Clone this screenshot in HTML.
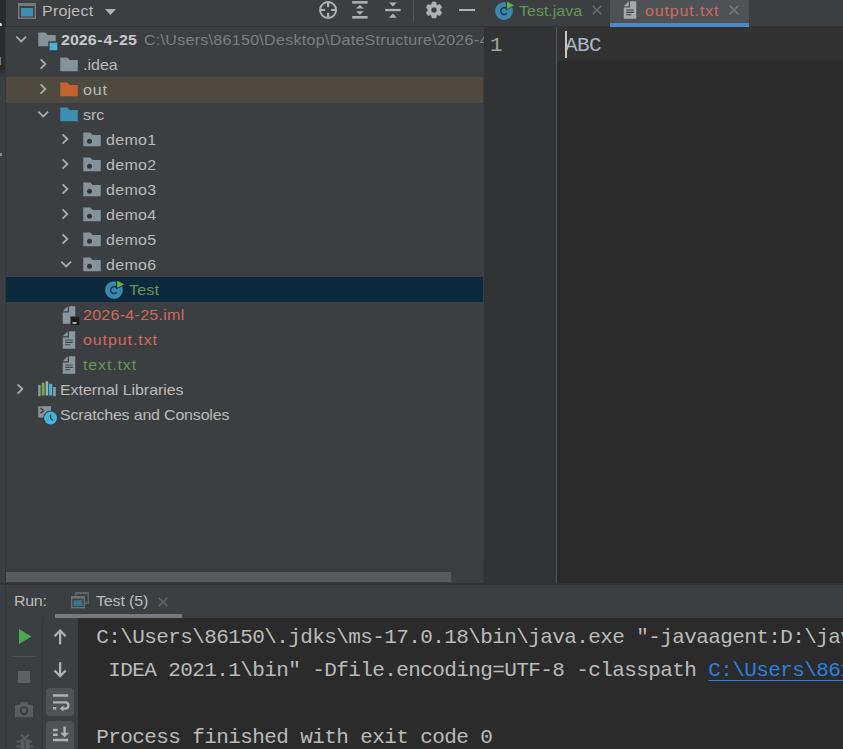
<!DOCTYPE html>
<html>
<head>
<meta charset="utf-8">
<style>
html,body{margin:0;padding:0;}
body{width:843px;height:749px;overflow:hidden;background:#3c3f41;position:relative;font-family:"Liberation Sans",sans-serif;color:#bbbbbb;}
.abs{position:absolute;}
.t{position:absolute;white-space:nowrap;font-size:15px;line-height:25px;height:25px;color:#bbbbbb;transform:scaleX(1.0667);transform-origin:0 0;}
.t.mono{transform:none;letter-spacing:-0.6px;}
.mono{font-family:"Liberation Mono",monospace;}
svg{position:absolute;overflow:visible;}
.tree{position:absolute;left:0;top:27px;width:484px;height:545px;overflow:hidden;}
.tree .t{margin-top:-27px;}
.tree svg{margin-top:-27px;}
</style>
</head>
<body>

<div class="abs" style="left:0;top:0;width:5.5px;height:69px;background:#2b2b2b;"></div>
<div class="abs" style="left:0;top:69px;width:5.5px;height:9px;background:linear-gradient(#2b2b2b,#3c3f41);"></div>
<div class="abs" style="left:5px;top:27px;width:1px;height:722px;background:#35383a;"></div>
<div class="abs" style="left:-1.5px;top:22.8px;width:3.6px;height:3.6px;border-radius:2px;background:#dddddd;"></div>
<div class="abs" style="left:0;top:56.5px;width:1.2px;height:8.5px;background:#777777;"></div>
<div class="abs" style="left:0;top:153px;width:2px;height:2.5px;background:#8a8c8e;"></div>
<div class="abs" style="left:6px;top:26px;width:837px;height:1px;background:#323232;"></div>
<div class="abs" style="left:6px;top:76.5px;width:477px;height:26px;background:#4e4a3f;"></div>
<div class="abs" style="left:6px;top:277px;width:477px;height:25px;background:#0d293e;"></div>
<div class="abs" style="left:484px;top:27px;width:359px;height:556px;background:#2b2b2b;"></div>
<div class="abs" style="left:484px;top:27px;width:72px;height:556px;background:#313335;"></div>
<div class="abs" style="left:557px;top:27px;width:286px;height:34px;background:#323232;"></div>
<div class="abs" style="left:556px;top:27px;width:1px;height:556px;background:#555555;"></div>
<div class="abs" style="left:610px;top:0;width:139px;height:26px;background:#4e5254;"></div>
<div class="abs" style="left:610px;top:23px;width:139px;height:4px;background:#4a88c7;"></div>
<div class="abs" style="left:6px;top:572px;width:445px;height:10px;background:#595b5d;"></div>
<div class="abs" style="left:0;top:583px;width:843px;height:1.6px;background:#313335;"></div>
<div class="abs" style="left:78px;top:618px;width:765px;height:131px;background:#2b2b2b;"></div>
<div class="abs" style="left:481.5px;top:560px;width:2.5px;height:23px;background:#383b3d;"></div>
<div class="abs" style="left:55px;top:614px;width:127px;height:4px;background:#767a7e;"></div>
<div class="abs" style="left:41.5px;top:618px;width:1px;height:131px;background:#35383a;"></div>

<div class="t" style="left:42px;top:-2px;letter-spacing:0.2px;">Project</div>
<div class="tree">
<div class="t" style="left:60.5px;top:27px;font-weight:bold;color:#c8c8c8;">2026<span style="padding:0 0.7px">-</span>4<span style="padding:0 0.7px">-</span>25</div>
<div class="t" style="left:144px;top:27px;color:#7d7d7d;letter-spacing:0.28px;">C:\Users\86150\Desktop\DateStructure\2026-4-25</div>
<div class="t" style="left:83px;top:52px;">.idea</div>
<div class="t" style="left:83px;top:77px;letter-spacing:0.8px;">out</div>
<div class="t" style="left:83px;top:102px;">src</div>
<div class="t" style="left:105.8px;top:127px;letter-spacing:0.3px;">demo1</div>
<div class="t" style="left:105.8px;top:152px;letter-spacing:0.3px;">demo2</div>
<div class="t" style="left:105.8px;top:177px;letter-spacing:0.3px;">demo3</div>
<div class="t" style="left:105.8px;top:202px;letter-spacing:0.3px;">demo4</div>
<div class="t" style="left:105.8px;top:227px;letter-spacing:0.3px;">demo5</div>
<div class="t" style="left:105.8px;top:252px;letter-spacing:0.3px;">demo6</div>
<div class="t" style="left:129px;top:277px;color:#629755;letter-spacing:0.15px;">Test</div>
<div class="t" style="left:83px;top:302px;color:#cf695c;letter-spacing:0.27px;">2026-4-25.iml</div>
<div class="t" style="left:83px;top:327px;color:#cf695c;letter-spacing:0.85px;">output.txt</div>
<div class="t" style="left:83px;top:352px;color:#629755;letter-spacing:0.8px;">text.txt</div>
<div class="t" style="left:60px;top:377px;letter-spacing:-0.05px;">External Libraries</div>
<div class="t" style="left:60px;top:402px;letter-spacing:-0.18px;">Scratches and Consoles</div>
</div>
<div class="t" style="left:519px;top:-2px;color:#629755;">Test.java</div>
<div class="t" style="left:645px;top:-2px;color:#cf695c;letter-spacing:0.8px;">output.txt</div>
<div class="t mono" style="left:490px;top:33.2px;font-size:21px;color:#a4a3a3;">1</div>
<div class="t mono" style="left:565px;top:33.2px;font-size:21px;color:#a9b7c6;">ABC</div>
<div class="abs" style="left:565px;top:31px;width:2.2px;height:27px;background:#c8c8c8;"></div>
<div class="t" style="left:14px;top:588px;letter-spacing:-0.3px;">Run:</div>
<div class="t" style="left:95.7px;top:588px;letter-spacing:-0.15px;">Test (5)</div>
<div class="t mono" style="left:96.2px;top:625px;font-size:21px;">C:\Users\86150\.jdks\ms-17.0.18\bin\java.exe "-javaagent:D:\java\IntelliJ</div>
<div class="t mono" style="left:96.2px;top:658.3px;font-size:21px;">&nbsp;IDEA 2021.1\bin" -Dfile.encoding=UTF-8 -classpath <span style="color:#2f7fdc;text-decoration:underline;text-decoration-thickness:1.3px;text-underline-offset:3.5px;">C:\Users\86150\Desktop</span></div>
<div class="t mono" style="left:96.2px;top:725.1px;font-size:21px;">Process finished with exit code 0</div>
<svg style="left:18px;top:3px;" width="18" height="16" viewBox="0 0 18 16"><rect x="0.75" y="0.75" width="16.5" height="14.5" fill="none" stroke="#737a7f" stroke-width="1.5"/><rect x="0" y="0" width="18" height="3" fill="#737a7f"/><rect x="3" y="5" width="12" height="8.5" fill="#3d8fb4"/></svg>
<svg style="left:104.5px;top:8.7px;" width="11" height="6" viewBox="0 0 11 6"><path d="M0 0 H11 L5.5 6 Z" fill="#afb1b3"/></svg>
<svg style="left:319px;top:1px;" width="19" height="19" viewBox="0 0 19 19"><circle cx="9.1" cy="9" r="8" fill="none" stroke="#afb1b3" stroke-width="2"/><path d="M9.1 1 V6 M9.1 12 V17 M1.1 9 H6.1 M12.1 9 H17.1" stroke="#afb1b3" stroke-width="2.2"/></svg>
<svg style="left:352px;top:1px;" width="16" height="18" viewBox="0 0 16 18"><rect x="0.2" y="0.1" width="15.4" height="2.5" fill="#afb1b3"/><rect x="0.2" y="15" width="15.4" height="2.6" fill="#afb1b3"/><path d="M7.9 4 L11.9 7.6 H3.9 Z M7.9 13.7 L11.9 10.3 H3.9 Z" fill="#afb1b3"/></svg>
<svg style="left:385px;top:2px;" width="16" height="16" viewBox="0 0 16 16"><rect x="0.2" y="6.9" width="15.4" height="2.3" fill="#afb1b3"/><path d="M7.9 4.4 L11.8 0.5 H4 Z M7.9 11.6 L11.8 15.7 H4 Z" fill="#afb1b3"/></svg>
<div class="abs" style="left:413px;top:0;width:1px;height:21px;background:#555555;"></div>
<svg style="left:425.8px;top:2px;" width="16" height="16" viewBox="0 0 16 16"><path d="M9.79 16.00 L6.21 16.00 L5.55 13.48 L4.48 12.86 L1.96 13.55 L0.18 10.45 L2.03 8.62 L2.03 7.38 L0.18 5.55 L1.96 2.45 L4.48 3.14 L5.55 2.52 L6.21 -0.00 L9.79 -0.00 L10.45 2.52 L11.52 3.14 L14.04 2.45 L15.82 5.55 L13.97 7.38 L13.97 8.62 L15.82 10.45 L14.04 13.55 L11.52 12.86 L10.45 13.48 Z M8 5 A3 3 0 1 0 8 11 A3 3 0 1 0 8 5 Z" fill="#afb1b3" fill-rule="evenodd" stroke="#afb1b3" stroke-width="0.6" stroke-linejoin="round"/></svg>
<div class="abs" style="left:459px;top:8.8px;width:16px;height:2.5px;background:#afb1b3;"></div>
<div class="tree" style="pointer-events:none;">
<svg style="left:15.600000000000001px;top:36.4px;" width="10.4" height="6" viewBox="0 0 10.4 6"><path d="M0.3 0.6 L5.2 5.4 L10.1 0.6" fill="none" stroke="#a9acae" stroke-width="1.8"/></svg>
<svg style="left:40.2px;top:58.8px;" width="6" height="10" viewBox="0 0 6 10"><path d="M0.6 0.3 L5.4 5 L0.6 9.7" fill="none" stroke="#a9acae" stroke-width="1.8"/></svg>
<svg style="left:40.2px;top:83.8px;" width="6" height="10" viewBox="0 0 6 10"><path d="M0.6 0.3 L5.4 5 L0.6 9.7" fill="none" stroke="#a9acae" stroke-width="1.8"/></svg>
<svg style="left:37.8px;top:111.3px;" width="10.4" height="6" viewBox="0 0 10.4 6"><path d="M0.3 0.6 L5.2 5.4 L10.1 0.6" fill="none" stroke="#a9acae" stroke-width="1.8"/></svg>
<svg style="left:62.400000000000006px;top:134.3px;" width="6" height="10" viewBox="0 0 6 10"><path d="M0.6 0.3 L5.4 5 L0.6 9.7" fill="none" stroke="#a9acae" stroke-width="1.8"/></svg>
<svg style="left:62.400000000000006px;top:159.3px;" width="6" height="10" viewBox="0 0 6 10"><path d="M0.6 0.3 L5.4 5 L0.6 9.7" fill="none" stroke="#a9acae" stroke-width="1.8"/></svg>
<svg style="left:62.400000000000006px;top:184.3px;" width="6" height="10" viewBox="0 0 6 10"><path d="M0.6 0.3 L5.4 5 L0.6 9.7" fill="none" stroke="#a9acae" stroke-width="1.8"/></svg>
<svg style="left:62.400000000000006px;top:209.3px;" width="6" height="10" viewBox="0 0 6 10"><path d="M0.6 0.3 L5.4 5 L0.6 9.7" fill="none" stroke="#a9acae" stroke-width="1.8"/></svg>
<svg style="left:62.400000000000006px;top:234.3px;" width="6" height="10" viewBox="0 0 6 10"><path d="M0.6 0.3 L5.4 5 L0.6 9.7" fill="none" stroke="#a9acae" stroke-width="1.8"/></svg>
<svg style="left:60.8px;top:261.3px;" width="10.4" height="6" viewBox="0 0 10.4 6"><path d="M0.3 0.6 L5.2 5.4 L10.1 0.6" fill="none" stroke="#a9acae" stroke-width="1.8"/></svg>
<svg style="left:17.4px;top:384.4px;" width="6" height="10" viewBox="0 0 6 10"><path d="M0.6 0.3 L5.4 5 L0.6 9.7" fill="none" stroke="#a9acae" stroke-width="1.8"/></svg>
<svg style="left:36.7px;top:29.5px;" width="20" height="20" viewBox="0 0 16 16"><path d="M1 2 H6.6 L8.6 4 H15 V13 H1 Z" fill="#87939a"/><rect x="9" y="9" width="8" height="8" fill="#3c3f41"/><rect x="10.1" y="10.2" width="6.1" height="6" fill="#40b6e0"/></svg>
<svg style="left:58.9px;top:54.7px;" width="20" height="20" viewBox="0 0 16 16"><path d="M1 2 H6.6 L8.6 4 H15 V13 H1 Z" fill="#87939a"/></svg>
<svg style="left:58.9px;top:79.7px;" width="20" height="20" viewBox="0 0 16 16"><path d="M1 2 H6.6 L8.6 4 H15 V13 H1 Z" fill="#c4632f"/></svg>
<svg style="left:58.9px;top:104.7px;" width="20" height="20" viewBox="0 0 16 16"><path d="M1 2 H6.6 L8.6 4 H15 V13 H1 Z" fill="#3a8fb5"/></svg>
<svg style="left:81.8px;top:129.6px;" width="20" height="20" viewBox="0 0 16 16"><path d="M1 2 H6.6 L8.6 4 H15 V13 H1 Z" fill="#87939a"/><circle cx="6" cy="9" r="2" fill="#30363a"/></svg>
<svg style="left:81.8px;top:154.6px;" width="20" height="20" viewBox="0 0 16 16"><path d="M1 2 H6.6 L8.6 4 H15 V13 H1 Z" fill="#87939a"/><circle cx="6" cy="9" r="2" fill="#30363a"/></svg>
<svg style="left:81.8px;top:179.6px;" width="20" height="20" viewBox="0 0 16 16"><path d="M1 2 H6.6 L8.6 4 H15 V13 H1 Z" fill="#87939a"/><circle cx="6" cy="9" r="2" fill="#30363a"/></svg>
<svg style="left:81.8px;top:204.6px;" width="20" height="20" viewBox="0 0 16 16"><path d="M1 2 H6.6 L8.6 4 H15 V13 H1 Z" fill="#87939a"/><circle cx="6" cy="9" r="2" fill="#30363a"/></svg>
<svg style="left:81.8px;top:229.6px;" width="20" height="20" viewBox="0 0 16 16"><path d="M1 2 H6.6 L8.6 4 H15 V13 H1 Z" fill="#87939a"/><circle cx="6" cy="9" r="2" fill="#30363a"/></svg>
<svg style="left:81.8px;top:254.6px;" width="20" height="20" viewBox="0 0 16 16"><path d="M1 2 H6.6 L8.6 4 H15 V13 H1 Z" fill="#87939a"/><circle cx="6" cy="9" r="2" fill="#30363a"/></svg>
<svg style="left:104.1px;top:279.6px;" width="20" height="20" viewBox="0 0 16 16"><circle cx="8" cy="8" r="7.1" fill="#3889b0"/><path d="M10.2 10 A2.8 2.8 0 1 1 10.2 6.1" fill="none" stroke="#1f3a4b" stroke-width="1.3"/><path d="M9.6 -1 L17.2 3.4 L9.6 7.6 Z" fill="#0d293e"/><path d="M10.5 0.6 L16 3.45 L10.5 6.3 Z" fill="#5fb843"/></svg>
<svg style="left:59px;top:304.6px;" width="20" height="20" viewBox="0 0 16 16"><path d="M7 1 L3 5 H7 Z" fill="#8b979e"/><path d="M8 1 V6 H3 V15 H9 V9 H13 V1 Z" fill="#8b979e"/><rect x="9.7" y="9.8" width="6.5" height="6.2" fill="#1b1b1b"/><rect x="10.8" y="13.8" width="3.2" height="1.2" fill="#e0e0e0"/></svg>
<svg style="left:59px;top:329.6px;" width="20" height="20" viewBox="0 0 16 16"><path d="M7 1 L3 5 H7 Z" fill="#8b979e"/><path d="M8 1 V6 H3 V15 H13 V1 Z" fill="#8b979e"/><path d="M5 7.5 h6 v0.95 h-6 Z M5 9.4 h6 v0.95 h-6 Z M5 11.3 h4 v0.95 h-4 Z" fill="#3d4448"/></svg>
<svg style="left:59px;top:354.6px;" width="20" height="20" viewBox="0 0 16 16"><path d="M7 1 L3 5 H7 Z" fill="#8b979e"/><path d="M8 1 V6 H3 V15 H13 V1 Z" fill="#8b979e"/><path d="M5 7.5 h6 v0.95 h-6 Z M5 9.4 h6 v0.95 h-6 Z M5 11.3 h4 v0.95 h-4 Z" fill="#3d4448"/></svg>
<svg style="left:38px;top:381px;" width="18" height="16" viewBox="0 0 18 16"><rect x="0.2" y="3.8" width="2.4" height="11.4" fill="#8e9aa2"/><rect x="3.7" y="1.7" width="2.9" height="12.8" fill="#62b543"/><rect x="7.6" y="0.3" width="2.6" height="14.2" fill="#a2adb5"/><rect x="11.1" y="2.8" width="3.1" height="11.7" fill="#40b6e0"/><rect x="15.1" y="6" width="2.7" height="9.2" fill="#8e9aa2"/></svg>
<svg style="left:38px;top:406px;" width="20" height="19" viewBox="0 0 20 19"><rect x="0.2" y="0.2" width="12.8" height="11.4" fill="#87939a"/><path d="M2.4 2 L5.6 4.6 L2.4 7.2" fill="none" stroke="#3c3f41" stroke-width="1.4"/><circle cx="12.6" cy="12" r="7.5" fill="#3c3f41"/><circle cx="12.6" cy="12" r="6.4" fill="#40b6e0"/><path d="M12.6 8.4 V12.3 L14.8 14.6" fill="none" stroke="#2f3d46" stroke-width="1.5"/></svg>
</div>
<svg style="left:494.4px;top:1.2px;" width="20" height="20" viewBox="0 0 16 16"><circle cx="8" cy="8" r="7.1" fill="#3889b0"/><path d="M10.2 10 A2.8 2.8 0 1 1 10.2 6.1" fill="none" stroke="#1f3a4b" stroke-width="1.3"/><path d="M9.6 -1 L17.2 3.4 L9.6 7.6 Z" fill="#3c3f41"/><path d="M10.5 0.6 L16 3.45 L10.5 6.3 Z" fill="#5fb843"/></svg>
<svg style="left:592.3px;top:5.199999999999999px;" width="10" height="10" viewBox="0 0 10 10"><path d="M0.7 0.7 L9.3 9.3 M9.3 0.7 L0.7 9.3" stroke="#6a6e70" stroke-width="1.4"/></svg>
<svg style="left:620.3px;top:0.3px;" width="20" height="20" viewBox="0 0 16 16"><path d="M7 1 L3 5 H7 Z" fill="#a4a9ac"/><path d="M8 1 V6 H3 V15 H13 V1 Z" fill="#a4a9ac"/><path d="M5 7.5 h6 v0.95 h-6 Z M5 9.4 h6 v0.95 h-6 Z M5 11.3 h4 v0.95 h-4 Z" fill="#3a3d3f"/></svg>
<svg style="left:729.4px;top:5.199999999999999px;" width="10" height="10" viewBox="0 0 10 10"><path d="M0.7 0.7 L9.3 9.3 M9.3 0.7 L0.7 9.3" stroke="#787c7e" stroke-width="1.4"/></svg>
<svg style="left:71px;top:592px;" width="18" height="17" viewBox="0 0 18 17"><rect x="4.7" y="0.7" width="12.6" height="10.6" fill="none" stroke="#5d6469" stroke-width="1.4"/><rect x="4" y="0" width="14" height="2.2" fill="#5d6469"/><rect x="0" y="4" width="14" height="12.5" fill="#3c3f41"/><rect x="0.7" y="4.7" width="12.6" height="11" fill="none" stroke="#6a7176" stroke-width="1.4"/><rect x="0" y="4" width="14" height="2.6" fill="#6a7176"/><rect x="2.6" y="8.2" width="8.8" height="6" fill="#37768f"/></svg>
<svg style="left:158.2px;top:597px;" width="10" height="10" viewBox="0 0 10 10"><path d="M0.7 0.7 L9.3 9.3 M9.3 0.7 L0.7 9.3" stroke="#63676a" stroke-width="1.4"/></svg>
<svg style="left:18.7px;top:628.6px;" width="13" height="15" viewBox="0 0 13 15"><path d="M0 0 L12.5 7.45 L0 14.9 Z" fill="#4aa953"/></svg>
<div class="abs" style="left:12px;top:656px;width:24px;height:1px;background:#515456;"></div>
<div class="abs" style="left:17.5px;top:670.6px;width:12.8px;height:12.5px;background:#5e6062;"></div>
<svg style="left:15px;top:702.3px;" width="18" height="15.2" viewBox="0 0 18 15.2"><path d="M0 3 H4.6 L5.6 0 H12.4 L13.4 3 H18 V15.2 H0 Z" fill="#5a5d5f"/><circle cx="9" cy="8.6" r="3.3" fill="none" stroke="#3c3f41" stroke-width="2"/></svg>
<svg style="left:16px;top:733.6px;" width="18" height="16" viewBox="0 0 18 16"><path d="M5 0.5 L9 4.5 L13 0.5" fill="none" stroke="#5a5d5f" stroke-width="2.2"/><path d="M4.5 5 H13.5 V16 H4.5 Z" fill="#5a5d5f"/><path d="M0.5 7.5 H16 M0.5 12.5 H17.5" stroke="#5a5d5f" stroke-width="2.2"/><path d="M9 6 V16" stroke="#3c3f41" stroke-width="1"/></svg>
<svg style="left:53px;top:629px;" width="14" height="16" viewBox="0 0 14 16"><path d="M7.1 1.6 V15.4" fill="none" stroke="#afb1b3" stroke-width="2.3"/><path d="M1.5 7.2 L7.1 1.6 L12.7 7.2" fill="none" stroke="#afb1b3" stroke-width="2.2"/></svg>
<svg style="left:53px;top:661px;" width="14" height="17" viewBox="0 0 14 17"><path d="M7.1 1.2 V15" fill="none" stroke="#afb1b3" stroke-width="2.3"/><path d="M1.5 9.5 L7.1 15.1 L12.7 9.5" fill="none" stroke="#afb1b3" stroke-width="2.2"/></svg>
<div class="abs" style="left:46.3px;top:688px;width:27.5px;height:28px;border-radius:3.5px;background:#4f5355;"></div>
<svg style="left:52.5px;top:694px;" width="16" height="18" viewBox="0 0 16 18"><path d="M0 1.5 H15.2 M0 8.4 H13 A3.2 3.2 0 0 1 13 14.6 H9.5 M0 14.2 H3.3" fill="none" stroke="#afb1b3" stroke-width="2.4"/><path d="M6.6 14.4 L10.5 11.4 V17.4 Z" fill="#afb1b3"/></svg>
<div class="abs" style="left:46.3px;top:721px;width:27.5px;height:28px;border-radius:3.5px 3.5px 0 0;background:#4f5355;"></div>
<svg style="left:52.5px;top:726px;" width="16" height="16" viewBox="0 0 16 16"><path d="M0 4 H4.7 M0 8.8 H4.7 M0 14 H15.2 M11.6 0.5 V8" fill="none" stroke="#afb1b3" stroke-width="2.4"/><path d="M7.1 6.7 H16.1 L11.6 11.2 Z" fill="#afb1b3"/></svg>
</body>
</html>
